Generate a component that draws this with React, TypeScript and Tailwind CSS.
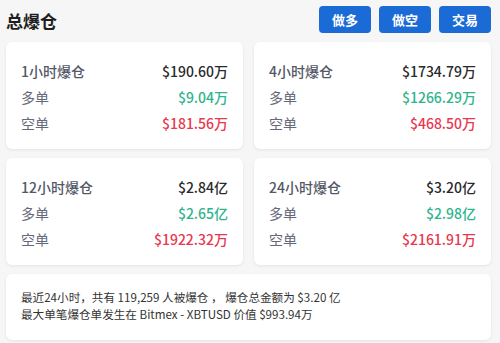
import React from "react";

type Card = {
  title: string;
  total: string;
  long: string;
  short: string;
};

const cards: Card[] = [
  { title: "1小时爆仓", total: "$190.60万", long: "$9.04万", short: "$181.56万" },
  { title: "4小时爆仓", total: "$1734.79万", long: "$1266.29万", short: "$468.50万" },
  { title: "12小时爆仓", total: "$2.84亿", long: "$2.65亿", short: "$1922.32万" },
  { title: "24小时爆仓", total: "$3.20亿", long: "$2.98亿", short: "$2161.91万" },
];

function StatCard({ card }: { card: Card }) {
  return (
    <div className="h-[107px] rounded-md bg-white px-[15px] pt-[17px] shadow-[0_1px_3px_rgba(0,0,0,0.08)]">
      <div className="flex h-[25.5px] items-center justify-between">
        <span className="text-[14px] font-medium text-[#545766]">{card.title}</span>
        <span className="text-[14px] font-medium text-[#2a2a2a]">{card.total}</span>
      </div>
      <div className="flex h-[25.5px] items-center justify-between">
        <span className="text-[14px] text-[#656879]">多单</span>
        <span className="text-[14px] font-medium text-[#2fb48c]">{card.long}</span>
      </div>
      <div className="flex h-[26.5px] items-center justify-between">
        <span className="text-[14px] text-[#656879]">空单</span>
        <span className="text-[14px] font-medium text-[#e8384f]">{card.short}</span>
      </div>
    </div>
  );
}

export default function App() {
  return (
    <div
      className="min-h-screen w-full bg-[#f6f6f7] pl-[6px] pr-[9px] pt-[6px]"
      style={{ fontFamily: '"Noto Sans CJK SC", "Noto Sans", sans-serif' }}
    >
      {/* Header */}
      <div className="mb-[9px] flex h-[27px] items-center justify-between">
        <h1 className="mt-[2px] text-[17px] font-bold text-[#1e1e1e]">总爆仓</h1>
        <div className="flex gap-[8px]">
          {["做多", "做空", "交易"].map((b) => (
            <button
              key={b}
              className="h-[27px] w-[52px] rounded-[4px] bg-[#1a6bd6] text-[13px] font-bold text-white"
            >
              {b}
            </button>
          ))}
        </div>
      </div>

      {/* Cards */}
      <div className="grid grid-cols-2 gap-x-[11px] gap-y-[9px]">
        {cards.map((c) => (
          <StatCard key={c.title} card={c} />
        ))}
      </div>

      {/* Summary */}
      <div className="mt-[9px] h-[66px] rounded-md bg-white px-[15px] pt-[15px] text-[11.6px] leading-[17px] text-[#333] shadow-[0_1px_3px_rgba(0,0,0,0.08)]">
        <p>最近24小时，共有 119,259 人被爆仓 ， 爆仓总金额为 $3.20 亿</p>
        <p>最大单笔爆仓单发生在 Bitmex - XBTUSD 价值 $993.94万</p>
      </div>
    </div>
  );
}
